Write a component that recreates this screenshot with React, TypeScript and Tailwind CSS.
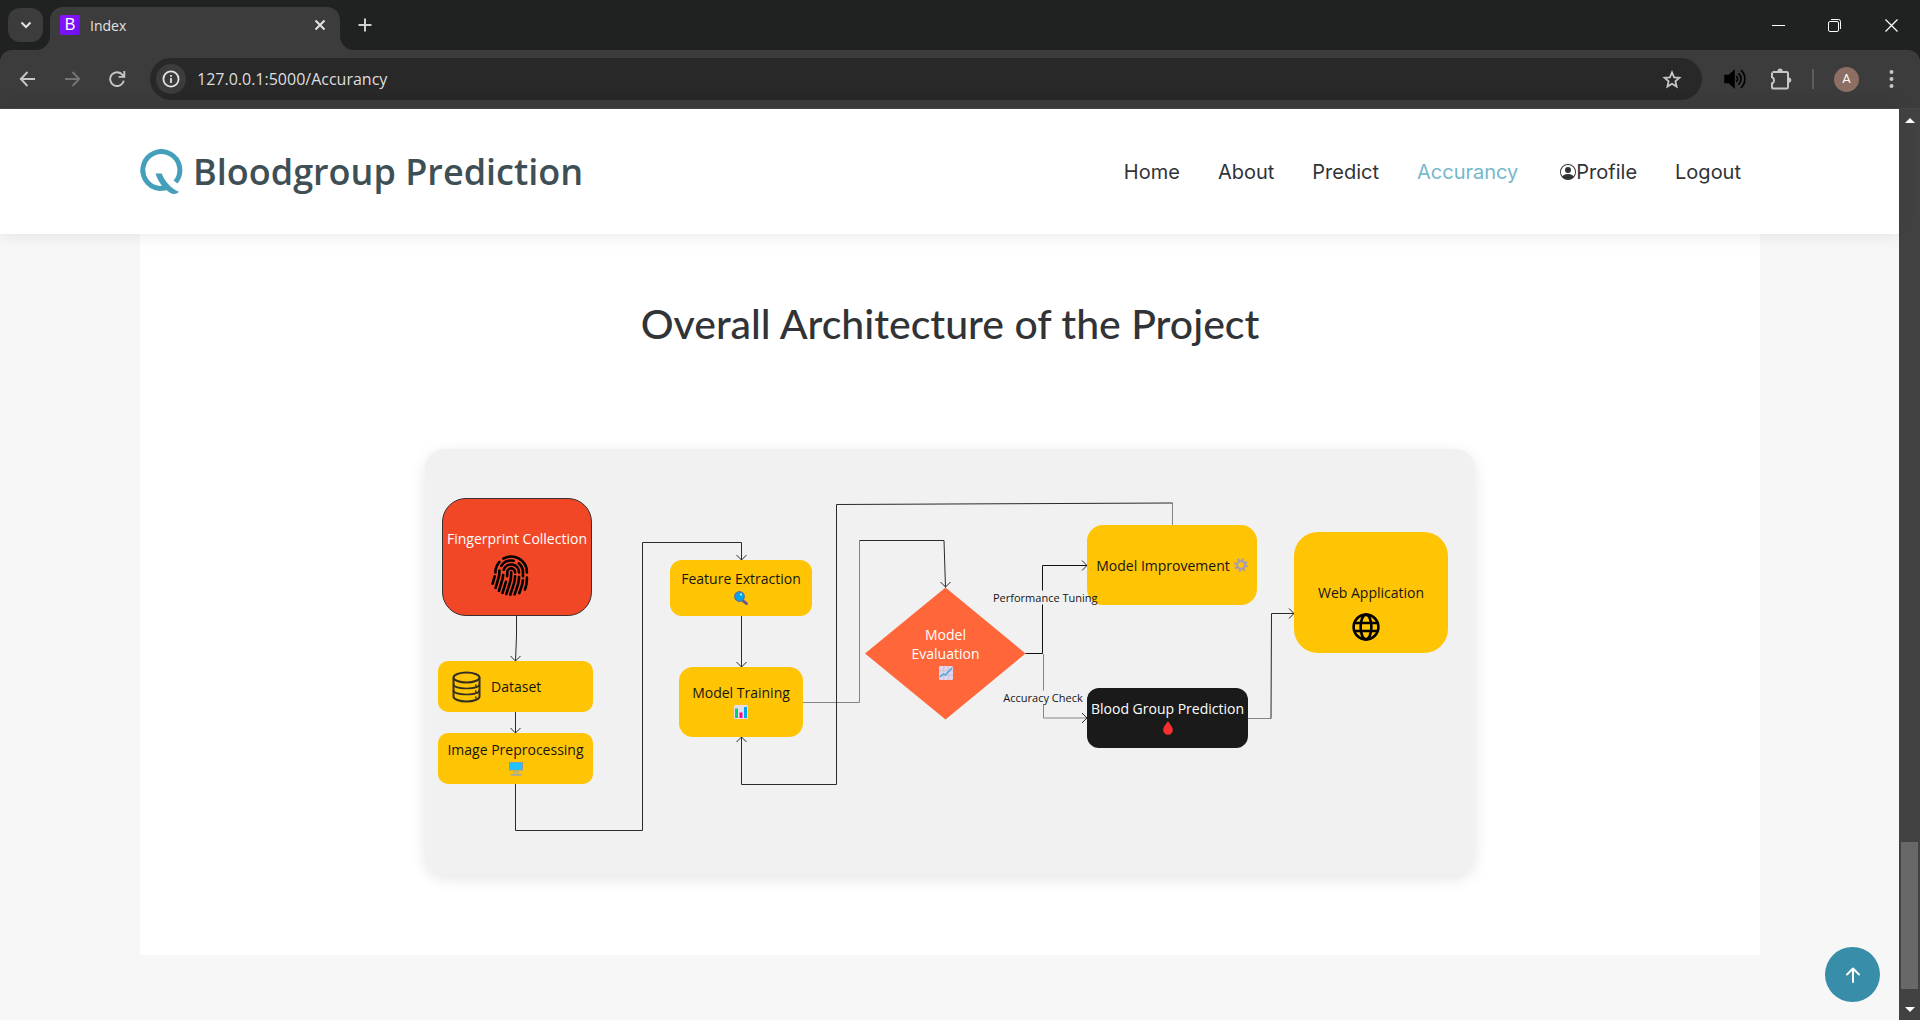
import type { ReactNode } from 'react';
import { BsFingerprint, BsPersonCircle } from 'react-icons/bs';

function TabStrip() {
  return (
    <div className="flex h-[50px] items-stretch bg-[#202221] text-[#e3e3e3]">
      <div className="flex items-center pl-2">
        <button aria-label="Search tabs" className="flex h-[34px] w-[35px] items-center justify-center rounded-xl bg-[#3c3c3c]">
          <svg width="12" height="8" viewBox="0 0 12 8" fill="none" stroke="currentColor" strokeWidth="2">
            <path d="M1.5 1.5 6 6l4.5-4.5" />
          </svg>
        </button>
      </div>
      <div className="relative mt-[7px] ml-[7px] flex w-[290px] items-center rounded-t-[13px] bg-[#3c3c3c] pr-3.5 pb-[7px] pl-2.5">
        <svg className="absolute bottom-0 -left-3.5" width="14" height="14" viewBox="0 0 14 14">
          <path d="M14 0v14H0A14 14 0 0 0 14 0z" fill="#3c3c3c" />
        </svg>
        <svg className="absolute -right-3.5 bottom-0" width="14" height="14" viewBox="0 0 14 14">
          <path d="M0 0v14h14A14 14 0 0 1 0 0z" fill="#3c3c3c" />
        </svg>
        <span className="flex size-5 items-center justify-center rounded-xs bg-linear-to-br from-[#8a12fc] to-[#6c10f2] font-['Liberation_Sans',sans-serif] text-base text-white">
          B
        </span>
        <span className="ml-2.5 flex-1 font-['Open_Sans',sans-serif] text-[14px]">Index</span>
        <button aria-label="Close tab">
          <svg width="12" height="12" viewBox="0 0 12 12" fill="none" stroke="currentColor" strokeWidth="2">
            <path d="m1.5 1.5 9 9m0-9-9 9" />
          </svg>
        </button>
      </div>
      <button aria-label="New tab" className="ml-[18px] flex items-center">
        <svg width="14" height="14" viewBox="0 0 14 14" fill="none" stroke="#cfcfcf" strokeWidth="2">
          <path d="M7 .5v13M.5 7h13" />
        </svg>
      </button>
      <div className="ml-auto flex text-white">
        <button aria-label="Minimize" className="flex w-14 items-center justify-center">
          <svg width="13" height="13" viewBox="0 0 13 13" stroke="currentColor">
            <path d="M0 6.5h13" />
          </svg>
        </button>
        <button aria-label="Restore" className="flex w-14 items-center justify-center">
          <svg width="13" height="13" viewBox="0 0 13 13" fill="none" stroke="currentColor">
            <rect x=".5" y="2.5" width="10" height="10" rx="1.5" />
            <path d="M3 .5h7.5a2 2 0 0 1 2 2V10" />
          </svg>
        </button>
        <button aria-label="Close window" className="flex w-[58px] items-center justify-center">
          <svg width="13" height="13" viewBox="0 0 13 13" stroke="currentColor" strokeWidth="1.2">
            <path d="m.5.5 12 12m0-12-12 12" />
          </svg>
        </button>
      </div>
    </div>
  );
}

function Toolbar() {
  return (
    <div className="bg-[#202221]">
      <div className="flex h-[59px] items-center rounded-t-xl border-b border-[#4a4646] bg-[#3c3c3c] text-[#c7c7c7]">
        <button aria-label="Back" className="ml-[19px]">
          <svg width="17" height="16" viewBox="0 0 17 16" fill="none" stroke="currentColor" strokeWidth="1.9">
            <path d="M8.5 1 1.8 8l6.7 7M1.8 8H16" />
          </svg>
        </button>
        <button aria-label="Forward" className="ml-7 text-[#747474]">
          <svg width="17" height="16" viewBox="0 0 17 16" fill="none" stroke="currentColor" strokeWidth="1.9">
            <path d="m8.5 1 6.700 7-6.700 7M15.200 8H1" />
          </svg>
        </button>
        <button aria-label="Reload" className="ml-7">
          <svg width="17" height="16" viewBox="0 0 17 16" fill="none" stroke="currentColor" strokeWidth="1.9">
            <path d="M14.800 9.600A6.900 6.900 0 1 1 13.600 4l1.600 1.800M15.300 0v5.900H9.600" />
          </svg>
        </button>
        <div className="ml-6 flex h-[42px] flex-1 items-center rounded-full bg-[#282828] pr-5 pl-1.5">
          <button aria-label="Site information" className="flex size-[30px] items-center justify-center rounded-full bg-[#3c3c3c] text-[#e3e3e3]">
            <svg width="18" height="18" viewBox="0 0 18 18" fill="none" stroke="currentColor" strokeWidth="1.8">
              <circle cx="9" cy="9" r="7.6" />
              <path d="M9 8v5M9 5v1.8" />
            </svg>
          </button>
          <input
            aria-label="Address"
            readOnly
            value="127.0.0.1:5000/Accurancy"
            className="ml-[11px] flex-1 bg-transparent font-['Open_Sans',sans-serif] text-[16px] text-[#dedede] outline-none"
          />
          <button aria-label="Bookmark this page">
            <svg width="20" height="19" viewBox="0 0 20 19" fill="none" stroke="currentColor" strokeWidth="1.8">
              <path d="m10 2.4 2.1 4.9 5.3.5-4 3.5 1.2 5.2-4.6-2.8-4.6 2.8 1.2-5.2-4-3.5 5.3-.5z" />
            </svg>
          </button>
        </div>
        <button aria-label="Volume" className="ml-[22px] text-black">
          <svg width="22" height="20" viewBox="0 0 22 20" fill="none" stroke="currentColor" strokeWidth="1.6">
            <path d="M1 6.5h4l5-4.6v16.2l-5-4.6H1z" fill="currentColor" />
            <path d="M12.3 7.2c1.7 1.6 1.7 4 0 5.6M14.5 4.4c3.4 3.2 3.4 8 0 11.2M17 1.2c5.2 5 5.2 12.6 0 17.6" />
          </svg>
        </button>
        <button aria-label="Extensions" className="ml-6">
          <svg width="22" height="22" viewBox="0 0 22 22" fill="none" stroke="currentColor" strokeWidth="2">
            <path d="M2.5 4h14.3q1.2 0 1.2 1.2v14.1q0 1.2-1.2 1.2H3.2Q2 20.5 2 19.3V15.5a3.6 3.6 0 0 0 0-6.5V4.5" />
            <path d="M7.5 3.2a2.6 2.6 0 0 1 5.2 0zM18.7 9.5a2.6 2.6 0 0 1 0 5.2z" fill="currentColor" stroke="none" />
          </svg>
        </button>
        <span className="ml-5 h-5 w-0.5 bg-[#5c5c5c]" />
        <button aria-label="Account" className="ml-5 flex size-[25px] items-center justify-center rounded-full bg-[#8d6e63] font-['Roboto',sans-serif] text-[13px] text-white">
          A
        </button>
        <button aria-label="Menu" className="mr-[26px] ml-[30px]">
          <svg width="5" height="18" viewBox="0 0 5 18" fill="currentColor">
            <circle cx="2.5" cy="2" r="2" />
            <circle cx="2.5" cy="9" r="2" />
            <circle cx="2.5" cy="16" r="2" />
          </svg>
        </button>
      </div>
    </div>
  );
}

function SiteHeader() {
  return (
    <header className="relative z-10 flex h-[125px] shrink-0 items-center justify-between bg-white pr-[158px] pl-[140px] shadow-[0_0_18px_rgba(0,0,0,0.1)]">
      <a href="#home" className="flex items-center gap-[10px]">
        <svg width="43" height="46" viewBox="1.5 0.5 43 46" fill="none" stroke="#439fba" strokeWidth="5">
          <path d="M37 33.5A18.5 18.5 0 1 0 21 40q5.5 0 9.500-2" />
          <path d="M17 25h6.200c1.800 5.300 6.300 11.200 11.300 15 2 1.500 4 2.600 6 3.200-2.500 2.800-6 2.700-9 1-6.500-4-11.500-10-14.500-19.200z" fill="#439fba" stroke="none" />
        </svg>
        <span className="font-['Open_Sans',sans-serif] text-[36px] leading-[44px] font-semibold text-[#3e5055]">Bloodgroup Prediction</span>
      </a>
      <nav className="flex items-center gap-[38px] font-['Inter',sans-serif] text-[20px] leading-[30px] text-[#313336]">
        <a href="#home">Home</a>
        <a href="#about">About</a>
        <a href="#predict">Predict</a>
        <a href="#accurancy" className="text-[#75b8cc]">Accurancy</a>
        <a href="#profile" className="flex items-center pl-1">
          <BsPersonCircle className="size-4" />
          Profile
        </a>
        <a href="#logout">Logout</a>
      </nav>
    </header>
  );
}

function Node({ className, children }: { className: string; children?: ReactNode }) {
  return <div className={`absolute flex flex-col items-center text-[14px] leading-[19px] whitespace-nowrap ${className}`}>{children}</div>;
}

function EdgeLabel({ className, children }: { className: string; children?: ReactNode }) {
  return <div className={`absolute w-[100px] text-center text-[11px] leading-[15px] whitespace-nowrap ${className}`}>{children}</div>;
}

function Connectors() {
  return (
    <svg className="absolute inset-0" width="1050" height="426" viewBox="0 0 1050 426" fill="none" stroke="#2a2a2a">
      <path d="M520.5 138.500 600.500 204.500 520.500 270.500 440 204.500z" fill="#ff663a" stroke="none" />
      <path d="M91.5 167v20l-1 25" />
      <path d="M90.5 263v21" />
      <path d="M90.5 335v46.5h127v-288h99V111" />
      <path d="M316.5 167v51" />
      <path d="M378 253.5h56.5v-162" stroke="#858585" />
      <path d="M434.5 91.5H519l1.5 47" />
      <path d="M747.5 76V54" stroke="#858585" />
      <path d="M747.5 54 411.5 55.5v280h-95V288" />
      <path d="M600.5 204.5h17v-49M617.5 141.5v-25H662" stroke="#111" />
      <path d="M618.5 205v36.5M618.5 255v14H662" stroke="#858585" />
      <path d="M823 269.5h23" stroke="#858585" />
      <path d="M846 269.5 846.5 164.5H869" />
      <path d="m85.5 207 5 5 5-5M85.5 279l5 5 5-5M311.5 106l5 5 5-5M311.5 213l5 5 5-5M515.5 133l5 5 5-5M311.5 293l5-5 5 5M657 111.5l5 5-5 5M657 264l5 5-5 5M864 159.500l5 5-5 5" />
    </svg>
  );
}

function ArchitectureDiagram() {
  return (
    <div className="relative mx-auto h-[426px] w-[1050px] rounded-[20px] bg-[#f1f1f1] font-['Open_Sans',sans-serif] text-[#151515] shadow-[0_4px_15px_rgba(0,0,0,0.1)]">
      <Connectors />
      <Node className="top-[49px] left-[17px] h-[118px] w-[150px] rounded-3xl border border-[#3a3030] bg-[#f24726] pt-[30px] text-white">
        Fingerprint Collection
        <BsFingerprint className="mt-1.5 mr-3 size-[42px] text-black" />
      </Node>
      <Node className="top-[212px] left-[13px] h-[51px] w-[155px] justify-center rounded-[10px] bg-[#ffc505]">
        <div className="flex w-full items-center gap-2.5 pl-3.5">
          <svg width="29" height="32" viewBox="0 0 29 32" fill="none" stroke="#33301f" strokeWidth="2">
            <ellipse cx="14.5" cy="6.5" rx="13" ry="5" />
            <path d="M1.5 6.5v19c0 2.8 5.8 5 13 5s13-2.2 13-5v-19" />
            <path d="M1.5 13c0 2.8 5.8 4.5 13 4.5s13-1.7 13-4.5M1.5 19c0 2.8 5.8 4.5 13 4.5s13-1.7 13-4.5" strokeWidth="1.5" />
            <path d="M23 14.5h1.5M23 20.5h1.5M23 26.5h1.5" />
          </svg>
          Dataset
        </div>
      </Node>
      <Node className="top-[284px] left-[13px] h-[51px] w-[155px] rounded-[10px] bg-[#ffc505] pt-[7px]">
        Image Preprocessing
        <svg className="mt-[3px]" width="14" height="14" viewBox="0 0 14 14">
          <path d="M0 0h14v8.500H0z" fill="#8f9aa5" />
          <path d="M1 .7h12v7H1z" fill="#22c4ff" />
          <path d="M4 9.500h6v1.200H4zM2 11.800h10.500l.5 2H1.300z" fill="#a9a9a0" />
        </svg>
      </Node>
      <Node className="top-[111px] left-[245px] h-14 w-[142px] rounded-xl bg-[#ffc505] pt-[9px]">
        Feature Extraction
        <svg className="mt-[3px]" width="14" height="14" viewBox="0 0 14 14">
          <path d="m8.500 9.300 4 3.300" stroke="#6b5790" strokeWidth="2.800" strokeLinecap="round" />
          <circle cx="5.5" cy="5.5" r="4.8" fill="#00a6ed" stroke="#5c6fa0" strokeWidth="1.2" />
          <circle cx="7" cy="3.5" r=".9" fill="#fff" />
        </svg>
      </Node>
      <Node className="top-[218px] left-[254px] h-[70px] w-[124px] rounded-[14px] bg-[#ffc505] pt-4">
        Model Training
        <svg className="mt-[3px]" width="14" height="14" viewBox="0 0 14 14">
          <rect width="14" height="14" rx="1.5" fill="#e4dceb" />
          <path d="M1 3.5h3V13H1z" fill="#00d26a" />
          <path d="M5.5 7.5h3V13h-3z" fill="#f70a8d" />
          <path d="M10 2h3v11h-3z" fill="#00a6ed" />
        </svg>
      </Node>
      <Node className="top-[176px] left-[460px] w-[121px] text-white">
        <span>Model</span>
        <span>Evaluation</span>
        <svg className="mt-[3px]" width="14" height="14" viewBox="0 0 14 14" fill="none">
          <rect width="14" height="14" rx="1.5" fill="#e0d6ea" />
          <path d="M4.7 0v14M9.3 0v14M0 4.7h14M0 9.3h14" stroke="#c3b7d3" strokeWidth=".7" />
          <path d="m.8 11 3.5-3 2 1L13 2" stroke="#36a1e8" strokeWidth="1.3" />
        </svg>
      </Node>
      <Node className="top-[76px] left-[662px] h-20 w-[170px] justify-center rounded-2xl bg-[#ffc505]">
        <div className="flex items-center gap-1">
          Model Improvement
          <svg width="14" height="14" viewBox="0 0 14 14" fill="none" stroke="#a79bb5">
            <circle cx="7" cy="7" r="3.9" strokeWidth="2.2" />
            <circle cx="7" cy="7" r="5.8" strokeWidth="2.2" strokeDasharray="2.2 2.355" />
          </svg>
        </div>
      </Node>
      <Node className="top-[239px] left-[662px] h-[60px] w-[161px] rounded-xl bg-[#1a1a1a] pt-[11px] text-white">
        Blood Group Prediction
        <svg className="mt-[3px]" width="10" height="14" viewBox="0 0 10 14">
          <path d="M5 0c1.200 2.600 4.800 5.500 4.800 9A4.800 4.800 0 0 1 .2 9C.2 5.500 3.800 2.600 5 0z" fill="#f92f2f" />
        </svg>
      </Node>
      <Node className="top-[83px] left-[869px] h-[121px] w-[154px] rounded-3xl bg-[#ffc505] pt-[51px]">
        Web Application
        <svg className="mt-[11px] mr-2.5" width="28" height="28" viewBox="0 0 28 28" fill="none" stroke="#000" strokeWidth="2.6">
          <circle cx="14" cy="14" r="12.4" />
          <ellipse cx="14" cy="14" rx="5.4" ry="12.4" />
          <path d="M2 10h24M2 18h24" />
        </svg>
      </Node>
      <EdgeLabel className="top-[141px] left-[568px]">Performance Tuning</EdgeLabel>
      <EdgeLabel className="top-[241px] left-[568px]">Accuracy Check</EdgeLabel>
    </div>
  );
}

function Scrollbar() {
  return (
    <div className="flex w-[21px] shrink-0 flex-col items-center bg-[#424242] pt-[9px] pb-2">
      <svg width="10" height="5" viewBox="0 0 10 5" fill="#fff">
        <path d="M5 0l5 5H0z" />
      </svg>
      <div className="mt-auto mb-[18px] h-[147px] w-[17px] bg-[#686868]" />
      <svg width="10" height="5" viewBox="0 0 10 5" fill="#fff">
        <path d="M0 0h10L5 5z" />
      </svg>
    </div>
  );
}

export default function App() {
  return (
    <div className="flex min-h-screen flex-col">
      <TabStrip />
      <Toolbar />
      <div className="flex flex-1">
        <div className="relative flex flex-1 flex-col bg-[#f7f7f7]">
          <SiteHeader />
          <main className="mr-[139px] ml-[140px] bg-white pt-[66px] pb-20">
            <h1 className="mb-[101px] text-center font-['Lato',sans-serif] text-[41px] leading-[48px] font-medium text-[#313336]">
              Overall Architecture of the Project
            </h1>
            <ArchitectureDiagram />
          </main>
          <a href="#top" aria-label="Back to top" className="absolute right-[19px] bottom-[18px] flex size-[55px] items-center justify-center rounded-full bg-[#388da8]">
            <svg width="14" height="16" viewBox="0 0 14 16" fill="none" stroke="#fff" strokeWidth="2" strokeLinecap="round" strokeLinejoin="round">
              <path d="M7 15V1.5M1 7.5l6-6 6 6" />
            </svg>
          </a>
        </div>
        <Scrollbar />
      </div>
    </div>
  );
}
